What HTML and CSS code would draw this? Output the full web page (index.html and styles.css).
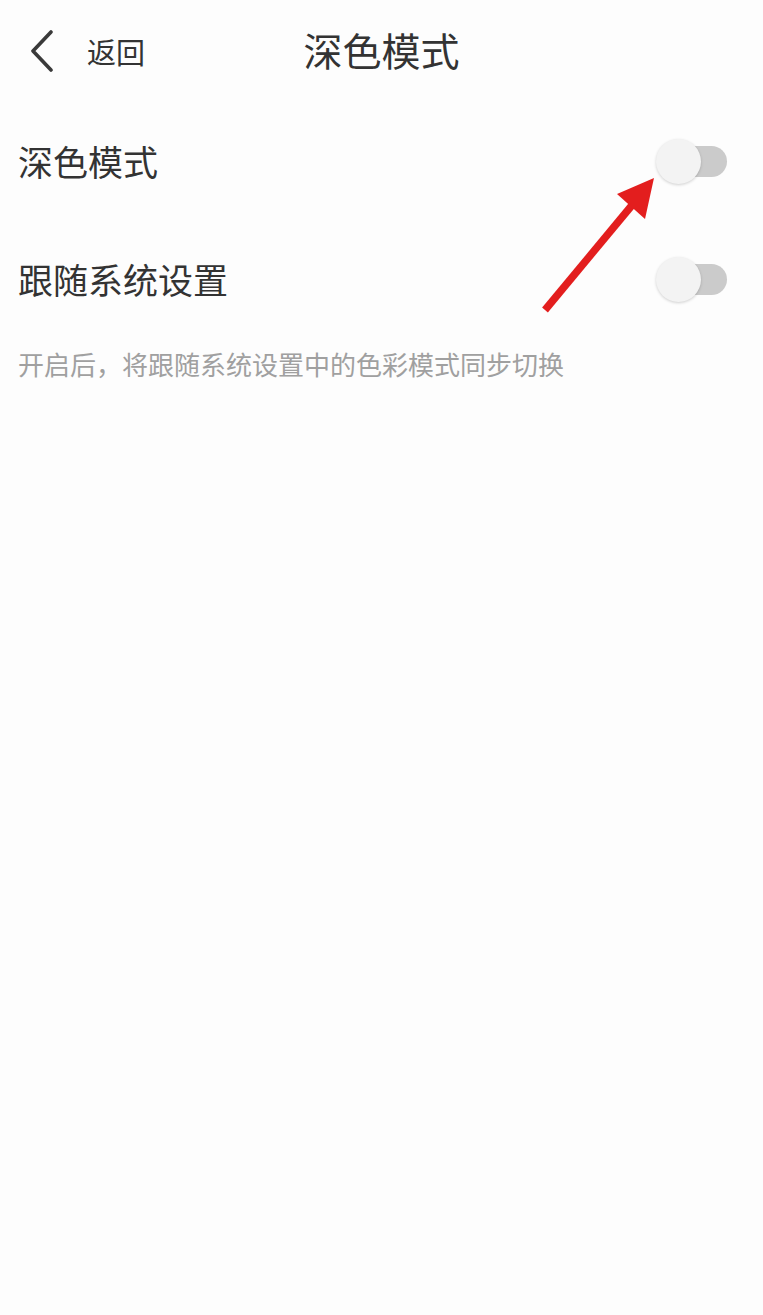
FILE: index.html
```html
<!DOCTYPE html>
<html lang="zh-CN">
<head>
    <meta charset="UTF-8">
    <meta name="viewport" content="width=device-width, initial-scale=1.0">
    <title>深色模式</title>
    <link rel="stylesheet" href="styles.css">
</head>
<body>
<header class="top-bar">
    <a class="back" href="#">
        <svg class="back-icon" width="26" height="42" viewBox="0 0 26 42">
            <polyline points="22,2 4,21 22,40" fill="none" stroke="#3a3a3a" stroke-width="3.6" stroke-linecap="round" stroke-linejoin="round"/>
        </svg>
        <span class="back-text">返回</span>
    </a>
    <h1 class="title">深色模式</h1>
    <span></span>
</header>

<div class="list">
    <div class="row">
        <span class="label">深色模式</span>
        <span class="switch"><span class="thumb"></span></span>
    </div>
    <div class="row">
        <span class="label">跟随系统设置</span>
        <span class="switch"><span class="thumb"></span></span>
    </div>
    <p class="hint">开启后，将跟随系统设置中的色彩模式同步切换</p>
</div>

<!-- pointer arrow -->
<svg class="pointer" width="763" height="400" viewBox="0 0 763 400">
    <line x1="545" y1="310" x2="633" y2="204" stroke="#e31e1e" stroke-width="7.5"/>
    <polygon points="654,178 617,194 645,219" fill="#e31e1e"/>
</svg>
</body>
</html>
```

FILE: styles.css
```css
body {
    margin: 0;
    background-color: #fdfdfd;
    color: #333;
    font-family: "Noto Sans CJK SC", "Noto Sans", sans-serif;
    position: relative;
    min-height: 1315px;
}
.top-bar {
    height: 101px;
    display: grid;
    grid-template-columns: 1fr auto 1fr;
    align-items: center;
}
.back {
    display: flex;
    align-items: center;
    padding-left: 29px;
    color: #333;
    text-decoration: none;
}
.back-icon {
    display: block;
}
.back-text {
    font-size: 29px;
    margin-left: 32px;
}
.title {
    margin: 0;
    margin-top: -4px;
    font-size: 39px;
    font-weight: normal;
    color: #333;
}
.list {
    padding: 0 36px 0 18px;
}
.row {
    height: 118px;
    display: flex;
    align-items: center;
    justify-content: space-between;
}
.label {
    font-size: 35px;
    color: #333;
}
.switch {
    position: relative;
    width: 71px;
    height: 31px;
    margin-top: 2px;
}
.switch::before {
    content: "";
    position: absolute;
    left: 4px;
    right: 0;
    top: 0;
    bottom: 0;
    border-radius: 16px;
    background-color: #cbcbcb;
}
.thumb {
    position: absolute;
    left: 0;
    top: -7px;
    width: 45px;
    height: 45px;
    border-radius: 50%;
    background-color: #f3f3f3;
    box-shadow: 0 1px 3px rgba(0, 0, 0, 0.18);
}
.hint {
    margin: 0;
    padding-top: 12px;
    font-size: 26px;
    line-height: 30px;
    color: #a0a0a0;
}
.pointer {
    position: absolute;
    left: 0;
    top: 0;
}
```
